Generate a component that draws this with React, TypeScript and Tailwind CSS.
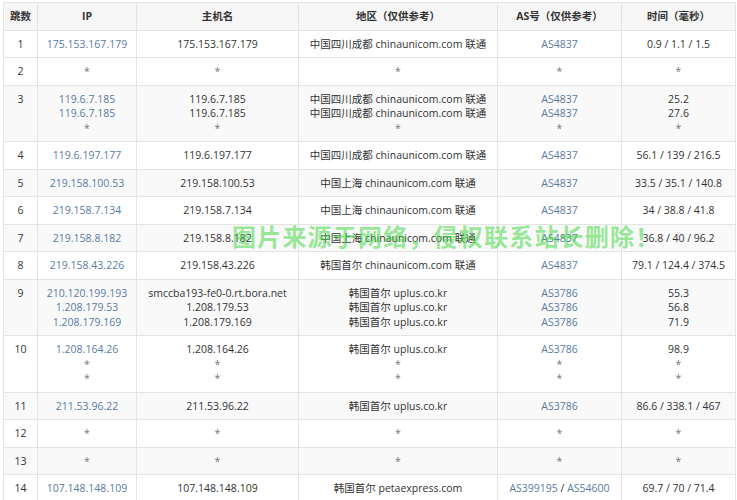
type Cell = string[];

interface Hop {
  hop: number;
  ip: Cell;
  host: Cell;
  region: Cell;
  as: Cell;
  time: Cell;
}

const CU1 = '中国四川成都 chinaunicom.com 联通';
const CUSH = '中国上海 chinaunicom.com 联通';
const UP = '韩国首尔 uplus.co.kr';

const star = (n: number) => Array.from({ length: n }, () => '*');

const HOPS: Hop[] = [
  { hop: 1, ip: ['175.153.167.179'], host: ['175.153.167.179'], region: [CU1], as: ['AS4837'], time: ['0.9 / 1.1 / 1.5'] },
  { hop: 2, ip: star(1), host: star(1), region: star(1), as: star(1), time: star(1) },
  {
    hop: 3,
    ip: ['119.6.7.185', '119.6.7.185', '*'],
    host: ['119.6.7.185', '119.6.7.185', '*'],
    region: [CU1, CU1, '*'],
    as: ['AS4837', 'AS4837', '*'],
    time: ['25.2', '27.6', '*'],
  },
  { hop: 4, ip: ['119.6.197.177'], host: ['119.6.197.177'], region: [CU1], as: ['AS4837'], time: ['56.1 / 139 / 216.5'] },
  { hop: 5, ip: ['219.158.100.53'], host: ['219.158.100.53'], region: [CUSH], as: ['AS4837'], time: ['33.5 / 35.1 / 140.8'] },
  { hop: 6, ip: ['219.158.7.134'], host: ['219.158.7.134'], region: [CUSH], as: ['AS4837'], time: ['34 / 38.8 / 41.8'] },
  { hop: 7, ip: ['219.158.8.182'], host: ['219.158.8.182'], region: [CUSH], as: ['AS4837'], time: ['36.8 / 40 / 96.2'] },
  { hop: 8, ip: ['219.158.43.226'], host: ['219.158.43.226'], region: ['韩国首尔 chinaunicom.com 联通'], as: ['AS4837'], time: ['79.1 / 124.4 / 374.5'] },
  {
    hop: 9,
    ip: ['210.120.199.193', '1.208.179.53', '1.208.179.169'],
    host: ['smccba193-fe0-0.rt.bora.net', '1.208.179.53', '1.208.179.169'],
    region: [UP, UP, UP],
    as: ['AS3786', 'AS3786', 'AS3786'],
    time: ['55.3', '56.8', '71.9'],
  },
  {
    hop: 10,
    ip: ['1.208.164.26', '*', '*'],
    host: ['1.208.164.26', '*', '*'],
    region: [UP, '*', '*'],
    as: ['AS3786', '*', '*'],
    time: ['98.9', '*', '*'],
  },
  { hop: 11, ip: ['211.53.96.22'], host: ['211.53.96.22'], region: [UP], as: ['AS3786'], time: ['86.6 / 338.1 / 467'] },
  { hop: 12, ip: star(1), host: star(1), region: star(1), as: star(1), time: star(1) },
  { hop: 13, ip: star(1), host: star(1), region: star(1), as: star(1), time: star(1) },
  {
    hop: 14,
    ip: ['107.148.148.109'],
    host: ['107.148.148.109'],
    region: ['韩国首尔 petaexpress.com'],
    as: ['AS399195 / AS54600'],
    time: ['69.7 / 70 / 71.4'],
  },
];

const HEAD = ['跳数', 'IP', '主机名', '地区（仅供参考）', 'AS号（仅供参考）', '时间（毫秒）'];

function Lines({ lines, link }: { lines: Cell; link?: boolean }) {
  return (
    <>
      {lines.map((l, i) => {
        if (l === '*') {
          return (
            <div key={i} className="text-[#777]">
              *
            </div>
          );
        }
        if (link && l.includes(' / ')) {
          const [a, b] = l.split(' / ');
          return (
            <div key={i}>
              <span className="text-[#5b7aa3]">{a}</span> / <span className="text-[#5b7aa3]">{b}</span>
            </div>
          );
        }
        return (
          <div key={i} className={link ? 'text-[#5b7aa3]' : ''}>
            {l}
          </div>
        );
      })}
    </>
  );
}

export default function App() {
  const td = 'border border-[#e4e4e4] px-1 pt-[6px] pb-[6px] align-top text-center';
  return (
    <div
      className="relative w-[737px] h-[500px] overflow-hidden bg-white pl-[3px] pt-[2px] text-[10.5px] leading-[14.5px] text-[#333]"
      style={{ fontFamily: '"Open Sans", "Noto Sans CJK SC", sans-serif' }}
    >
      <table className="table-fixed border-collapse w-[732px]">
        <colgroup>
          <col className="w-[34px]" />
          <col className="w-[99px]" />
          <col className="w-[162px]" />
          <col className="w-[199px]" />
          <col className="w-[124px]" />
          <col className="w-[114px]" />
        </colgroup>
        <thead>
          <tr className="bg-[#f6f6f6]">
            {HEAD.map((h) => (
              <th key={h} className="border border-[#e4e4e4] px-1 py-[6px] font-bold text-center text-[#333]">
                {h}
              </th>
            ))}
          </tr>
        </thead>
        <tbody>
          {HOPS.map((r) => (
            <tr key={r.hop} className={r.hop % 2 === 1 && r.hop !== 1 ? 'bg-[#f9f9f9]' : 'bg-white'}>
              <td className={td}>{r.hop}</td>
              <td className={td}>
                <Lines lines={r.ip} link />
              </td>
              <td className={td}>
                <Lines lines={r.host} />
              </td>
              <td className={td}>
                <Lines lines={r.region} />
              </td>
              <td className={td}>
                <Lines lines={r.as} link />
              </td>
              <td className={td}>
                <Lines lines={r.time} />
              </td>
            </tr>
          ))}
        </tbody>
      </table>

      {/* watermark over the table */}
      <div
        className="absolute left-[232px] top-[222px] whitespace-nowrap text-[24px] leading-[28px] font-bold tracking-[1.2px] text-[#44d844]/55"
        style={{ fontFamily: '"Noto Sans CJK SC", sans-serif' }}
      >
        图片来源于网络，侵权联系站长删除！
      </div>
    </div>
  );
}
